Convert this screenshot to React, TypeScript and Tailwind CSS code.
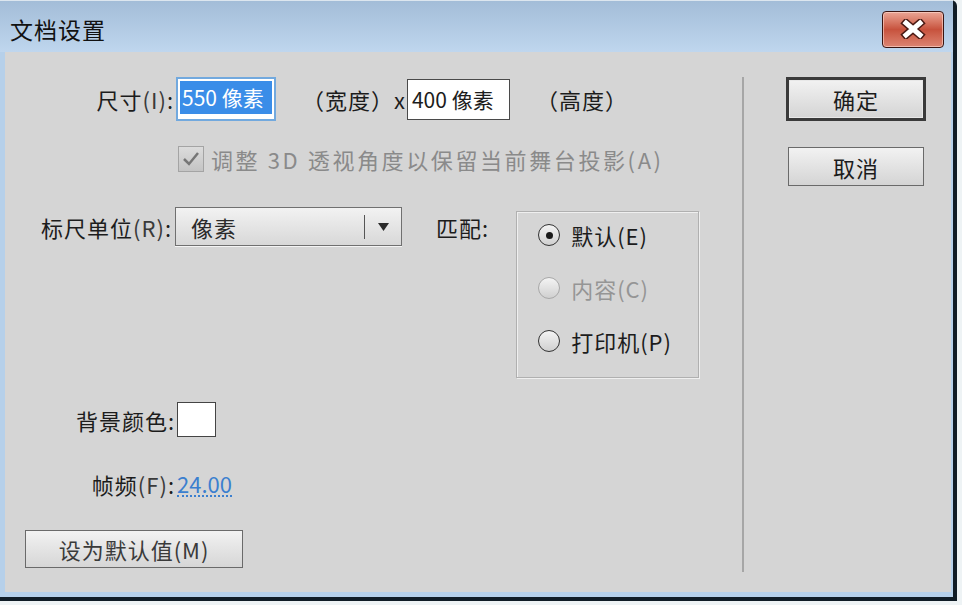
import React from 'react';

const font = "font-['Noto_Sans_CJK_SC','Microsoft_YaHei',sans-serif]";

const Radio: React.FC<{ label: string; checked?: boolean; disabled?: boolean }> = ({ label, checked, disabled }) => (
  <div className="flex items-center h-[26px]">
    <div
      className={`w-[22px] h-[22px] rounded-full border-[1.5px] flex items-center justify-center bg-gradient-to-b from-[#f4f4f4] to-[#d0d0d0] ${
        disabled ? 'border-[#a8a8a8]' : 'border-[#333333]'
      }`}
    >
      {checked && <div className="w-[7px] h-[7px] rounded-full bg-[#1a1a1a]" />}
    </div>
    <span className={`ml-[11px] ${disabled ? 'text-[#959595]' : 'text-[#1c1c1c]'}`}>{label}</span>
  </div>
);

export default function App() {
  return (
    <div className={`w-[962px] h-[605px] bg-[#eef3f5] ${font} text-[22px] tracking-[1px] leading-none text-[#1c1c1c]`}>
      <div className="w-[957px] h-[601px] flex flex-col bg-[#b6d0ea] border-r-[4px] border-b-[4px] border-[#101c26] rounded-tr-[6px]">
        {/* Title bar */}
        <div className="h-[52px] shrink-0 flex items-center justify-between pt-[5px] bg-gradient-to-b from-[#a3bdd8] to-[#bfd6ee] border-t border-[#dce6ef]">
          <span className="pl-[10px] text-[23px] tracking-[1px] text-[#111111]">文档设置</span>
          <button className="mr-[9px] w-[62px] h-[37px] rounded-[4px] border border-[#3a1512] bg-gradient-to-b from-[#eaa595] via-[#c7523d] to-[#dc8472] flex items-center justify-center shadow-[inset_0_0_0_1px_rgba(255,220,210,0.6)]">
            <svg width="26" height="20" viewBox="0 0 26 20">
              <path d="M6 4 L20 16 M20 4 L6 16" stroke="#4a1a14" strokeWidth="8" strokeLinecap="square" />
              <path d="M6 4 L20 16 M20 4 L6 16" stroke="#ffffff" strokeWidth="5" strokeLinecap="square" />
            </svg>
          </button>
        </div>

        {/* Body */}
        <div className="flex-1 ml-[5px] mr-[2px] mb-[5px] bg-[#d5d5d5] flex">
          {/* Left panel */}
          <div className="w-[737px] flex flex-col pt-[25px]">
            {/* Size row */}
            <div className="flex items-center h-[44px]">
              <span className="w-[169px] text-right">
                尺寸<span className="text-[#3a3a3a]">(I)</span>:
              </span>
              <div className="ml-[2px] w-[100px] h-[44px] bg-white border-[2px] border-[#72a9de] p-[2px] pb-0">
                <div className="h-[33px] w-[92px] bg-[#3a8de8] text-white flex items-center pl-[2px] text-[21px] tracking-[0px]">
                  550 像素
                </div>
              </div>
              <span className="ml-[26px]">（宽度）x</span>
              <div className="ml-[1px] w-[103px] h-[41px] bg-white border border-[#4a4a4a] flex items-center pl-[4px] text-[21px] tracking-[0px]">
                400 像素
              </div>
              <span className="ml-[26px]">（高度）</span>
            </div>

            {/* Checkbox row */}
            <div className="flex items-center h-[26px] mt-[25px] pl-[173px] text-[#8a8a8a]">
              <div className="w-[26px] h-[26px] border border-[#a4a4a4] bg-gradient-to-b from-[#dcdcdc] to-[#c4c4c4] flex items-center justify-center">
                <svg width="18" height="16" viewBox="0 0 18 16">
                  <path d="M2 8 L7 13 L16 2" stroke="#767676" strokeWidth="2.5" fill="none" />
                </svg>
              </div>
              <span className="ml-[7px] tracking-[2.6px]">调整 3D 透视角度以保留当前舞台投影(A)</span>
            </div>

            {/* Ruler units + match */}
            <div className="flex items-start mt-[35px]">
              <span className="w-[167px] h-[39px] flex items-center justify-end">
                标尺单位<span className="text-[#3a3a3a]">(R)</span>:
              </span>
              <div className="ml-[3px] w-[227px] h-[39px] border border-[#707070] bg-gradient-to-b from-[#f2f2f2] to-[#d8d8d8] flex items-center shadow-[0_1px_0_#f4f4f4]">
                <span className="pl-[15px] flex-1 text-[#2a2a2a]">像素</span>
                <div className="w-[1px] h-[24px] bg-[#555555]" />
                <span className="w-[36px] flex justify-center">
                  <svg width="11" height="8" viewBox="0 0 11 8">
                    <path d="M0 0 H11 L5.5 8 Z" fill="#2a2a2a" />
                  </svg>
                </span>
              </div>
              <span className="ml-[34px] h-[39px] flex items-center">匹配:</span>
              <div className="ml-[27px] mt-[4px] w-[183px] h-[167px] border border-[#b0b0b0] shadow-[inset_1px_1px_0_#efefef,1px_1px_0_#efefef] flex flex-col pt-[10px] pl-[21px] gap-[27px]">
                <Radio label="默认(E)" checked />
                <Radio label="内容(C)" disabled />
                <Radio label="打印机(P)" />
              </div>
            </div>

            {/* Background colour */}
            <div className="flex items-center h-[35px] mt-[24px]">
              <span className="w-[170px] text-right">背景颜色:</span>
              <div className="ml-[2px] w-[39px] h-[35px] bg-white border-[1.5px] border-[#444444]" />
            </div>

            {/* Frame rate */}
            <div className="flex items-center h-[30px] mt-[32px]">
              <span className="w-[170px] text-right">
                帧频<span className="text-[#3a3a3a]">(F)</span>:
              </span>
              <span className="ml-[2px] text-[#3b7fcf] tracking-[0px] border-b-[2px] border-dotted border-[#3b7fcf] pb-[1px]">
                24.00
              </span>
            </div>

            {/* Set default */}
            <button className="mt-[31px] ml-[20px] w-[218px] h-[38px] border border-[#6a6a6a] bg-gradient-to-b from-[#f2f2f2] to-[#d6d6d6] flex items-center justify-center text-[#3a3a3a]">
              设为默认值(M)
            </button>
          </div>

          {/* Separator */}
          <div className="w-[2px] h-[495px] mt-[25px] bg-[#a6a6a6]" />

          {/* Right panel */}
          <div className="flex flex-col pt-[25px]">
            <button className="ml-[42px] w-[140px] h-[44px] border-[3px] border-[#3a3a3a] bg-gradient-to-b from-[#f2f2f2] to-[#d4d4d4] flex items-center justify-center shadow-[inset_0_0_0_1px_#e8e8e8]">
              确定
            </button>
            <button className="mt-[26px] ml-[44px] w-[136px] h-[39px] border border-[#6a6a6a] bg-gradient-to-b from-[#f2f2f2] to-[#d4d4d4] flex items-center justify-center">
              取消
            </button>
          </div>
        </div>
      </div>
    </div>
  );
}
